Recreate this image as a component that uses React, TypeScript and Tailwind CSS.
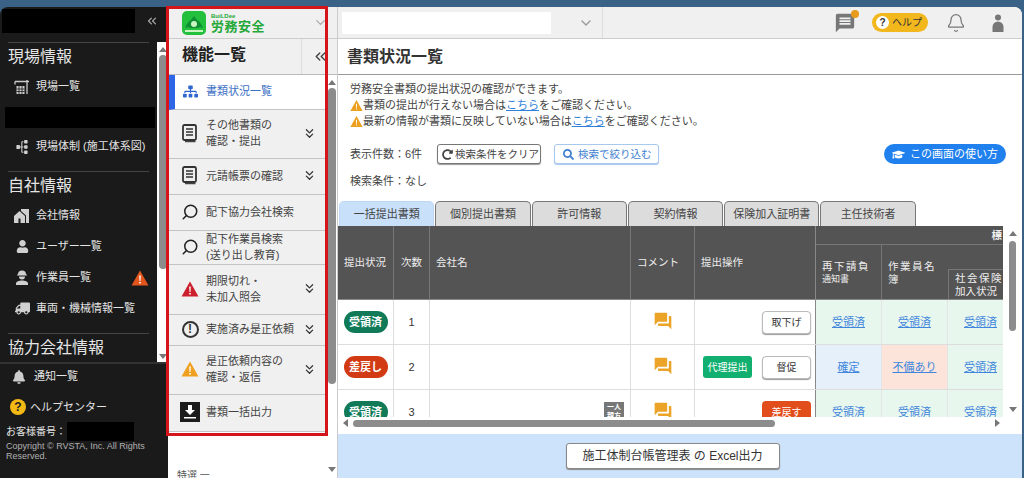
import React from 'react';
import { Bell, ChevronDown, ChevronsDown, ChevronsLeft, Search } from 'lucide-react';
import { FaBell, FaGraduationCap, FaRedoAlt, FaSearch, FaSitemap, FaTruck, FaUser } from 'react-icons/fa';
import { MdForum, MdMessage } from 'react-icons/md';

const DocIcon = () => (
  <svg width="16" height="19" viewBox="0 0 16 19" className="shrink-0">
    <path d="M3 17.500h10.500" stroke="#444" strokeWidth="1.500" fill="none" />
    <rect x="1" y="1" width="13" height="15" rx="1.500" fill="#eee" stroke="#333" strokeWidth="1.800" />
    <path d="M4 5h7M4 8h7M4 11h7" stroke="#333" strokeWidth="1.400" />
  </svg>
);

const AlertCircle = () => (
  <span className="flex h-[17px] w-[17px] shrink-0 items-center justify-center rounded-full border-2 border-[#333] text-[12px] leading-none font-bold text-[#333]">
    !
  </span>
);

const DownloadBox = () => (
  <svg width="20" height="20" viewBox="0 0 20 20" className="shrink-0">
    <rect width="20" height="20" fill="#1c1c1c" />
    <path d="M8 3h4v5h3l-5 5-5-5h3zM4 15h12v1.500H4z" fill="#fff" />
  </svg>
);

const Triangle = ({ color, size = 18 }: { color: string; size?: number }) => (
  <svg width={size} height={size} viewBox="0 0 18 18" className="shrink-0">
    <path d="M9 1.500 17.500 16.500H0.500z" fill={color} />
    <path d="M8.200 6.500h1.600l-.3 5.500h-1zM8.200 13h1.600v1.500H8.200z" fill="#fff" />
  </svg>
);

const CraneIcon = () => (
  <svg width="16" height="16" viewBox="0 0 16 16" fill="none" stroke="#ccc" strokeWidth="1.300">
    <path d="M1 2.500h14M13 1v14M1 2.500v3" />
    <rect x="2.500" y="7" width="8" height="8" fill="#ccc" stroke="none" />
    <path d="M5 7v8M8 7v8M2.500 10h8M2.500 12.500h8" stroke="#1a1a1a" strokeWidth="0.800" />
  </svg>
);

const HouseIcon = () => (
  <svg width="16" height="15" viewBox="0 0 16 15" fill="#d0d0d0">
    <path d="M5.500 3 11 8v7H0V8z" />
    <path d="M7 1h8v14h-3V7.500L7 3z" />
    <path d="M4.500 10.500h2V15h-2z" fill="#1a1a1a" />
  </svg>
);

const WorkerIcon = () => (
  <svg width="14" height="15" viewBox="0 0 14 15" fill="#d0d0d0">
    <path d="M3 4.500a4 4 0 0 1 8 0h1v1H2v-1z" />
    <path d="M4 6.500h6a3 3 0 0 1-6 0z" />
    <path d="M1 15v-1.500C1 11.500 4 10.500 7 10.500s6 1 6 3V15z" />
  </svg>
);

const LogoMark = () => (
  <svg width="24" height="24" viewBox="0 0 24 24" className="shrink-0">
    <rect width="24" height="24" rx="5" fill="#22c03c" />
    <path d="M3 17c2-5 4-7 6-8l3-4 3 4c2 1 4 3 6 8-2-1-4-1-5 0H8c-1-1-3-1-5 0z" fill="#0f8f33" />
    <circle cx="12" cy="13" r="3" fill="#c8f5c0" />
    <path d="M3 19h18v2H3z" fill="#c8f5c0" />
  </svg>
);

const darkNav = [
  { heading: '現場情報', first: true },
  { label: '現場一覧', icon: <CraneIcon /> },
  { blackout: true },
  { label: '現場体制 (施工体系図)', icon: <FaSitemap size={14} className="-rotate-90" /> },
  { heading: '自社情報' },
  { label: '会社情報', icon: <HouseIcon /> },
  { label: 'ユーザー一覧', icon: <FaUser size={13} /> },
  { label: '作業員一覧', icon: <WorkerIcon />, warn: true },
  { label: '車両・機械情報一覧', icon: <FaTruck size={15} className="-scale-x-100" /> },
  { heading: '協力会社情報' },
];

const menu = [
  { lines: ['書類状況一覧'], h: 'h-[35px]', active: true, icon: <FaSitemap size={15} color="#2f66d0" /> },
  { lines: ['その他書類の', '確認・提出'], h: 'h-[49px]', more: true, icon: <DocIcon /> },
  { lines: ['元請帳票の確認'], h: 'h-[36px]', more: true, icon: <DocIcon /> },
  { lines: ['配下協力会社検索'], h: 'h-[36px]', icon: <Search size={18} color="#222" className="-scale-x-100" /> },
  { lines: ['配下作業員検索', '(送り出し教育)'], h: 'h-[34px]', icon: <Search size={18} color="#222" className="-scale-x-100" /> },
  { lines: ['期限切れ・', '未加入照会'], h: 'h-[50px]', more: true, icon: <Triangle color="#cc1f2d" /> },
  { lines: ['実施済み是正依頼'], h: 'h-[31px]', more: true, icon: <AlertCircle /> },
  { lines: ['是正依頼内容の', '確認・返信'], h: 'h-[49px]', more: true, icon: <Triangle color="#f0a020" /> },
  { lines: ['書類一括出力'], h: 'h-[37px]', icon: <DownloadBox /> },
];

const tabs = ['一括提出書類', '個別提出書類', '許可情報', '契約情報', '保険加入証明書', '主任技術者'];

const headCols = 'grid grid-cols-[56px_36px_201px_64px_121px_66px_66px_55px]';
const rowCols = 'grid grid-cols-[56px_36px_201px_64px_121px_66px_66px_66px]';

const cellTone: Record<string, string> = {
  ok: 'bg-[#e8f7ee]',
  fixed: 'bg-[#e6f0fb]',
  bad: 'bg-[#fde4da]',
};

const rows = [
  { status: '受領済', tone: 'bg-[#107a58]', no: '1', action: '取下げ', cells: [['受領済', 'ok'], ['受領済', 'ok'], ['受領済', 'ok']] },
  { status: '差戻し', tone: 'bg-[#d13a12]', no: '2', action: '督促', proxy: true, cells: [['確定', 'fixed'], ['不備あり', 'bad'], ['受領済', 'ok']] },
  { status: '受領済', tone: 'bg-[#107a58]', no: '3', action: '差戻す', danger: true, badge: true, cells: [['受領済', 'ok'], ['受領済', 'ok'], ['受領済', 'ok']] },
];

const ScrollArrow = ({ up }: { up?: boolean }) => (
  <span className={`h-0 w-0 border-x-[4px] border-x-transparent ${up ? 'border-b-[5px] border-b-[#777]' : 'border-t-[5px] border-t-[#777]'}`} />
);

const DarkSidebar = () => (
  <aside className="flex w-[168px] shrink-0 flex-col overflow-hidden rounded-tl-lg bg-[#1a1a1a] text-[#e4e4e4]">
    <div className="flex h-[35px] shrink-0 items-start pt-[2px] pl-[2px]">
      <div className="h-[24px] w-[133px] bg-black" />
      <ChevronsLeft size={14} className="mt-[5px] ml-[10px] text-[#aaa]" />
    </div>
    <div className="flex h-[320px] shrink-0">
      <div className="w-[157px] overflow-hidden pr-2 pl-2">
        {darkNav.map((item, i) => {
          if (item.heading) {
            return (
              <div
                key={i}
                className={`mb-[2px] border-t border-[#444] pt-[2px] text-[16px] leading-[24px] ${item.first ? 'mt-0' : 'mt-[9px]'}`}
              >
                {item.heading}
              </div>
            );
          }
          if (item.blackout) {
            return <div key={i} className="mt-[5px] -mr-[6px] mb-[3px] -ml-[3px] h-[21px] bg-black" />;
          }
          return (
            <div key={i} className="flex h-[31px] items-center gap-[6px] pl-[6px] text-[11px]">
              <span className="flex w-[16px] shrink-0 justify-center text-[#d0d0d0]">{item.icon}</span>
              <span className="flex-1 whitespace-nowrap">{item.label}</span>
              {item.warn && <Triangle color="#e2561e" size={18} />}
            </div>
          );
        })}
      </div>
      <div className="flex w-[11px] flex-col items-center bg-white pt-[5px] pb-[3px]">
        <ScrollArrow up />
        <div className="mt-[3px] h-[214px] w-[8px] rounded bg-[#8c8c8c]" />
        <div className="flex-1" />
        <ScrollArrow />
      </div>
    </div>
    <div className="border-t-2 border-[#333] pl-[8px]">
      <div className="flex h-[25px] items-center gap-[8px] pl-[4px] text-[11px]">
        <FaBell size={14} className="text-[#ccc]" />
        通知一覧
      </div>
      <div className="mt-[3px] flex h-[30px] items-center gap-[4px] pl-[2px] text-[11px]">
        <span className="flex h-[16px] w-[16px] items-center justify-center rounded-full bg-[#f5b915] text-[12px] font-bold text-[#222]">?</span>
        ヘルプセンター
      </div>
      <div className="-ml-[2px] flex h-[19px] items-center text-[10px]">
        お客様番号：
        <div className="ml-[1px] h-[19px] w-[67px] bg-black" />
      </div>
      <p className="-ml-[2px] w-[150px] text-[9px] leading-[10px] text-[#b0b0b0]">
        Copyright © RVSTA, Inc. All Rights Reserved.
      </p>
    </div>
  </aside>
);

const MenuColumn = () => (
  <section className="flex w-[170px] shrink-0 flex-col border-r border-[#ccc] bg-white">
    <div className="flex h-[32px] shrink-0 items-center border-b border-[#ccc] bg-[#f0f0f0] pl-[14px]">
      <LogoMark />
      <div className="ml-[5px] flex flex-col pt-[2px] text-[#25a83a]">
        <span className="text-[6px] leading-[7px] font-bold">BuiLDee</span>
        <span className="text-[13px] leading-[14px] font-bold tracking-[0.5px]">労務安全</span>
      </div>
      <ChevronDown size={15} className="ml-[48px] text-[#aaa]" />
    </div>
    <div className="flex h-[36px] shrink-0 border-b border-[#bbb] bg-[#f0f0f0] text-[16px] font-bold text-[#222]">
      <div className="flex flex-1 items-center pb-[3px] pl-[14px]">機能一覧</div>
      <div className="flex w-[36px] items-center border-l border-[#ddd] pl-[10px]">
        <ChevronsLeft size={17} className="text-[#444]" />
      </div>
    </div>
    <div className="flex min-h-0 flex-1">
      <div className="w-[158px] pl-[1px]">
        {menu.map(item => (
          <div
            key={item.lines[0]}
            className={`flex items-center border-b border-[#c4c4c4] pb-[2px] text-[11px] leading-[16px] ${item.h} ${
              item.active ? 'border-l-[6px] border-l-[#2f66e8] bg-white pl-[3px] text-[#3c6fc4]' : 'bg-[#f0f0f0] pl-[9px] text-[#444]'
            }`}
          >
            <span className="flex w-[24px] shrink-0 justify-center">{item.icon}</span>
            <span className="ml-[4px] flex-1 whitespace-nowrap">
              {item.lines.map(l => (
                <div key={l}>{l}</div>
              ))}
            </span>
            {item.more && <ChevronsDown size={15} className="mr-[9px] shrink-0 text-[#333]" />}
          </div>
        ))}
        <div className="mt-[36px] pl-[8px] text-[10px] text-[#555]">特選 一</div>
      </div>
      <div className="flex flex-1 flex-col items-center pt-[5px] pb-[6px]">
        <ScrollArrow up />
        <div className="mt-[3px] h-[296px] w-[8px] rounded bg-[#8c8c8c]" />
        <div className="flex-1" />
        <ScrollArrow />
      </div>
    </div>
  </section>
);

const TopBar = () => (
  <header className="flex h-[32px] shrink-0 items-center border-b border-[#ccc] bg-[#f0f0f0] pl-[4px]">
    <div className="h-[22px] w-[209px] bg-white" />
    <ChevronDown size={16} className="ml-[27px] text-[#999]" />
    <div className="ml-[8px] h-full w-px bg-[#ddd]" />
    <div className="flex-1" />
    <div className="relative mr-[16px]">
      <MdMessage size={22} className="text-[#777]" />
      <span className="absolute -top-[2px] -right-[3px] h-[8px] w-[8px] rounded-full bg-[#e89a1c]" />
    </div>
    <div className="flex h-[19px] w-[56px] items-center gap-[3px] rounded-full bg-[#f2b71c] pl-[4px] text-[10px] text-[#333]">
      <span className="flex h-[13px] w-[13px] items-center justify-center rounded-full bg-white text-[10px] font-bold">?</span>
      ヘルプ
    </div>
    <Bell size={20} strokeWidth={1.5} className="ml-[18px] text-[#777]" />
    <svg width="12" height="18" viewBox="0 0 12 18" className="mr-[18px] ml-[26px]">
      <circle cx="6" cy="3.500" r="3" fill="#777" />
      <path d="M0.500 18V13a5.500 5.500 0 0 1 11 0v5z" fill="#777" />
    </svg>
  </header>
);

const Table = () => (
  <div className="flex h-[191px] shrink-0 overflow-hidden">
    <div className="w-[665px] shrink-0 overflow-hidden">
      <div className={`${headCols} h-[74px] border-b border-[#888] bg-[#545454] text-[10.5px] text-[#eee]`}>
        <div className="flex items-center border-r border-[#777] pl-[6px]">提出状況</div>
        <div className="flex items-center justify-center border-r border-[#777]">次数</div>
        <div className="flex items-center border-r border-[#777] pl-[6px]">会社名</div>
        <div className="flex items-center border-r border-[#777] pl-[6px]">コメント</div>
        <div className="flex items-center border-r border-[#888] pl-[6px]">提出操作</div>
        <div className="col-span-3 flex flex-col">
          <div className="h-[19px] border-b border-[#777] pr-px text-right leading-[19px] font-bold">標</div>
          <div className="grid flex-1 grid-cols-[66px_66px_55px] leading-[13px]">
            <div className="border-r border-[#777] pt-[15px] pl-[6px]">
              <div className="tracking-[1.500px]">再下請負</div>
              <div className="text-[9px]">通知書</div>
            </div>
            <div className="pt-[15px] pl-[6px]">
              <div className="tracking-[1.500px]">作業員名</div>
              簿
            </div>
            <div className="mt-[24px] border-t border-l border-[#777] pt-[2px] pl-[6px] whitespace-nowrap">
              <div className="tracking-[1.500px]">社会保険</div>
              加入状況
            </div>
          </div>
        </div>
      </div>
      {rows.map(row => (
        <div key={row.no} className={`${rowCols} h-[45px] w-[676px] border-b border-[#ddd] bg-white text-[11px]`}>
          <div className="flex items-center justify-center border-r border-[#ddd]">
            <span className={`flex h-[22px] w-[44px] items-center justify-center rounded-full text-[11px] font-bold text-white ${row.tone}`}>
              {row.status}
            </span>
          </div>
          <div className="flex items-center justify-center border-r border-[#ddd] text-[#333]">{row.no}</div>
          <div className="flex items-center justify-end border-r border-[#ddd] pr-[6px]">
            {row.badge && (
              <span className="flex h-[20px] w-[20px] flex-col items-center bg-[#777] text-[7px] leading-[9px] font-bold text-white">
                <span>一人</span>
                <span>親方</span>
              </span>
            )}
          </div>
          <div className="flex items-center justify-center border-r border-[#ddd] pb-[2px]">
            <MdForum size={20} color="#eba328" />
          </div>
          <div className="flex items-center justify-end gap-[10px] border-r border-[#888] pr-[4px] text-[10px]">
            {row.proxy && (
              <span className="flex h-[22px] w-[49px] items-center justify-center rounded-[3px] bg-[#12b070] text-white">代理提出</span>
            )}
            <span
              className={`flex h-[23px] w-[49px] items-center justify-center rounded-[4px] ${
                row.danger ? 'bg-[#e24e1b] text-white' : 'border border-[#bbb] bg-white text-[#333] shadow-[0_1px_1px_#999]'
              }`}
            >
              {row.action}
            </span>
          </div>
          {row.cells.map(([text, tone], i) => (
            <div
              key={i}
              className={`flex items-center justify-center border-r border-[#e4e4e4] text-[#3f86dc] underline ${cellTone[tone]}`}
            >
              {text}
            </div>
          ))}
        </div>
      ))}
    </div>
    <div className="flex w-[19px] shrink-0 flex-col items-center pt-[5px] pb-[5px]">
      <ScrollArrow up />
      <div className="mt-[5px] h-[90px] w-[7px] rounded bg-[#8c8c8c]" />
      <div className="flex-1" />
      <ScrollArrow />
    </div>
  </div>
);

const MainPanel = () => (
  <main className="flex min-w-0 flex-1 flex-col overflow-hidden rounded-tr-lg bg-white">
    <TopBar />
    <h1 className="h-[36px] shrink-0 border-b border-[#999] pl-[9px] text-[16px] leading-[35px] font-bold text-[#333]">書類状況一覧</h1>
    <div className="h-[126px] shrink-0 pt-[6px] text-[11px] leading-[16px] text-[#444]">
      <div className="pl-[12px]">
        <p>労務安全書類の提出状況の確認ができます。</p>
        <p className="flex items-center">
          <Triangle color="#eda020" size={13} />
          書類の提出が行えない場合は<span className="text-[#2f7fd8] underline">こちら</span>をご確認ください。
        </p>
        <p className="flex items-center">
          <Triangle color="#eda020" size={13} />
          最新の情報が書類に反映していない場合は<span className="text-[#2f7fd8] underline">こちら</span>をご確認ください。
        </p>
      </div>
      <div className="mt-[15px] flex items-center pr-[16px] pl-[12px]">
        <span className="w-[87px]">表示件数：6件</span>
        <button className="flex h-[20px] w-[104px] items-center gap-[2px] rounded-[3px] border border-[#777] bg-white pl-[4px] text-[10.5px] shadow-[0_1px_1px_#999]">
          <FaRedoAlt size={11} />
          検索条件をクリア
        </button>
        <button className="ml-[13px] flex h-[20px] w-[105px] items-center gap-[4px] rounded-[3px] border border-[#a8c8ee] bg-white pl-[8px] text-[10.5px] text-[#3f7fd0] shadow-[0_1px_1px_#a8c8ee]">
          <FaSearch size={11} />
          検索で絞り込む
        </button>
        <div className="flex-1" />
        <button className="flex h-[20px] w-[122px] items-center gap-[5px] rounded-full bg-[#2080ee] pl-[8px] text-[11px] text-white">
          <FaGraduationCap size={13} />
          この画面の使い方
        </button>
      </div>
      <p className="mt-[9px] pl-[12px]">検索条件：なし</p>
    </div>
    <div className="flex h-[25px] shrink-0 items-end gap-px pl-[1px] text-[11px] text-[#444]">
      {tabs.map((tab, i) => (
        <div
          key={tab}
          className={`flex h-[25px] w-[95.3px] items-center justify-center rounded-t-[5px] border border-b-0 ${
            i === 0 ? 'border-[#bcd6f5] bg-[#c9e0fb]' : 'border-[#777] bg-[#dcdcdc]'
          }`}
        >
          {tab}
        </div>
      ))}
    </div>
    <Table />
    <div className="flex h-[17px] shrink-0 items-center gap-[5px] pr-[22px] pb-[5px] pl-[5px]">
      <span className="h-0 w-0 border-y-[4px] border-r-[5px] border-y-transparent border-r-[#777]" />
      <div className="h-[7px] w-[422px] rounded bg-[#8c8c8c]" />
      <div className="flex-1" />
      <span className="h-0 w-0 border-y-[4px] border-l-[5px] border-y-transparent border-l-[#777]" />
    </div>
    <div className="flex flex-1 items-center justify-center bg-[#cde3fb] pr-[15px]">
      <button className="h-[26px] w-[214px] rounded-[3px] border border-[#888] bg-white text-[12px] text-[#333] shadow-[0_1px_1px_#888]">
        施工体制台帳管理表 の Excel出力
      </button>
    </div>
  </main>
);

export default function App() {
  return (
    <div className="relative h-[478px] w-[1024px] overflow-hidden bg-[#3a6186] pt-[7px] pr-[2px] font-['Liberation_Sans','Noto_Sans_CJK_JP',sans-serif]">
      <div className="flex h-[471px]">
        <DarkSidebar />
        <MenuColumn />
        <MainPanel />
      </div>
      <div className="pointer-events-none absolute top-[6px] left-[166px] h-[430px] w-[162px] border-[3px] border-[#d4161c]" />
    </div>
  );
}
